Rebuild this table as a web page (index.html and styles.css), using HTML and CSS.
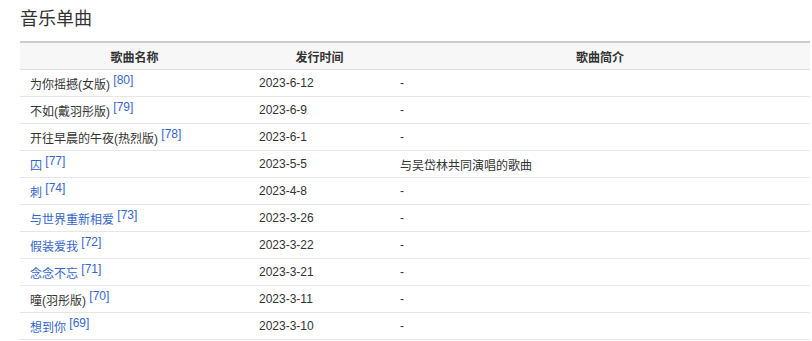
FILE: index.html
```html
<!DOCTYPE html>
<html lang="zh-CN">
<head>
  <meta charset="UTF-8" />
  <meta name="viewport" content="width=device-width, initial-scale=1.0" />
  <title>音乐单曲</title>
  <link rel="stylesheet" href="styles.css">
</head>
<body>
  <div class="section">
    <h2 class="section-title">音乐单曲</h2>
    <table class="song-table">
      <colgroup>
        <col class="col-name" />
        <col class="col-date" />
        <col class="col-desc" />
      </colgroup>
      <thead>
        <tr>
          <th>歌曲名称</th>
          <th>发行时间</th>
          <th>歌曲简介</th>
        </tr>
      </thead>
      <tbody>
        <tr>
          <td>为你摇撼(女版) <sup class="ref">[80]</sup></td>
          <td>2023-6-12</td>
          <td>-</td>
        </tr>
        <tr>
          <td>不如(戴羽彤版) <sup class="ref">[79]</sup></td>
          <td>2023-6-9</td>
          <td>-</td>
        </tr>
        <tr>
          <td>开往早晨的午夜(热烈版) <sup class="ref">[78]</sup></td>
          <td>2023-6-1</td>
          <td>-</td>
        </tr>
        <tr>
          <td><a class="link" href="#">囚</a> <sup class="ref">[77]</sup></td>
          <td>2023-5-5</td>
          <td>与吴岱林共同演唱的歌曲</td>
        </tr>
        <tr>
          <td><a class="link" href="#">刺</a> <sup class="ref">[74]</sup></td>
          <td>2023-4-8</td>
          <td>-</td>
        </tr>
        <tr>
          <td><a class="link" href="#">与世界重新相爱</a> <sup class="ref">[73]</sup></td>
          <td>2023-3-26</td>
          <td>-</td>
        </tr>
        <tr>
          <td><a class="link" href="#">假装爱我</a> <sup class="ref">[72]</sup></td>
          <td>2023-3-22</td>
          <td>-</td>
        </tr>
        <tr>
          <td><a class="link" href="#">念念不忘</a> <sup class="ref">[71]</sup></td>
          <td>2023-3-21</td>
          <td>-</td>
        </tr>
        <tr>
          <td>曈(羽彤版) <sup class="ref">[70]</sup></td>
          <td>2023-3-11</td>
          <td>-</td>
        </tr>
        <tr>
          <td><a class="link" href="#">想到你</a> <sup class="ref">[69]</sup></td>
          <td>2023-3-10</td>
          <td>-</td>
        </tr>
      </tbody>
    </table>
  </div>
</body>
</html>
```

FILE: styles.css
```css
/* 音乐单曲表格 */
body {
  margin: 0;
  font-family: "Liberation Sans", "Noto Sans CJK SC", sans-serif;
  color: #333;
  background: #fff;
}
.section {
  padding: 8px 0 0 20px;
}
.section-title {
  margin: 0 0 11px;
  font-size: 18px;
  font-weight: normal;
  line-height: 22px;
  color: #333;
}
.song-table {
  width: 790px;
  border-collapse: collapse;
  table-layout: fixed;
  font-size: 12px;
}
.col-name {
  width: 229px;
}
.col-date {
  width: 141px;
}
.song-table th {
  height: 26px;
  padding: 0;
  background: #f7f7f7;
  border-top: 2px solid #ccc;
  border-bottom: 1px solid #e0e0e0;
  font-weight: bold;
  text-align: center;
  color: #333;
}
.song-table td {
  height: 26px;
  padding: 0 0 0 10px;
  border-bottom: 1px solid #e6e6e6;
  text-align: left;
  vertical-align: middle;
}
.link {
  color: #36c;
  text-decoration: none;
}
.ref {
  color: #36c;
  font-size: 12px;
  line-height: 0;
  vertical-align: 5px;
}
```
